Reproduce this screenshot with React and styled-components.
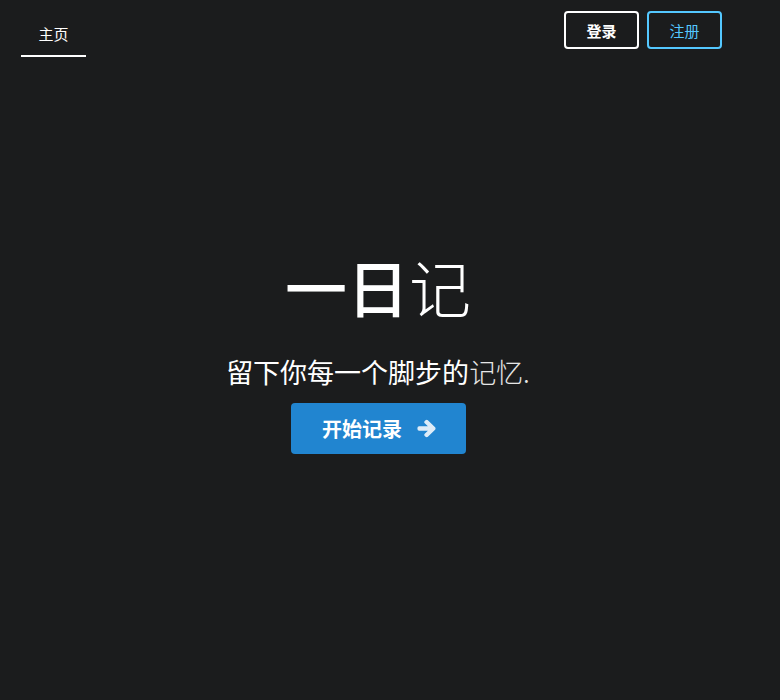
import React from "react";
import styled, { createGlobalStyle } from "styled-components";
import { FaArrowRight } from "react-icons/fa";

const GlobalStyle = createGlobalStyle`
  html, body {
    margin: 0;
    padding: 0;
    background: #1b1c1d;
  }
  body {
    font-family: Lato, "Noto Sans CJK SC", sans-serif;
    color: #fff;
  }
`;

const Page = styled.div`
  min-height: 700px;
  background: #1b1c1d;
  display: flex;
  flex-direction: column;
`;

const Header = styled.div`
  display: flex;
  align-items: flex-start;
  justify-content: space-between;
  padding: 11px 58px 0 21px;
`;

const NavItem = styled.a`
  display: flex;
  align-items: center;
  justify-content: center;
  width: 65px;
  height: 44px;
  border-bottom: 2px solid #fff;
  font-size: 15px;
  color: #fff;
  text-decoration: none;
`;

const Actions = styled.div`
  display: flex;
  gap: 8px;
`;

const OutlineButton = styled.button`
  width: 75px;
  height: 38px;
  background: transparent;
  border: 2px solid ${(p) => (p.$blue ? "#54c8ff" : "#fff")};
  border-radius: 4px;
  color: ${(p) => (p.$blue ? "#54c8ff" : "#fff")};
  font-family: Lato, "Noto Sans CJK SC", sans-serif;
  font-size: 15px;
  font-weight: ${(p) => (p.$blue ? 400 : 700)};
  cursor: pointer;
  padding: 0;
`;

const Hero = styled.div`
  display: flex;
  flex-direction: column;
  align-items: center;
  padding: 194px 24px 0 0;
`;

const Title = styled.h1`
  margin: 0;
  font-size: 62px;
  line-height: 70px;
  font-weight: 500;
  font-family: "Noto Sans CJK SC", sans-serif;
`;

const Thin = styled.span`
  font-weight: 300;
  color: ${(p) => p.$dim || "#fff"};
`;

const Subtitle = styled.h2`
  margin: 34px 0 0;
  font-size: 27px;
  line-height: 34px;
  font-weight: 400;
  font-family: "Noto Sans CJK SC", sans-serif;
`;

const StartButton = styled.button`
  margin-top: 14px;
  width: 175px;
  height: 51px;
  border: none;
  border-radius: 4px;
  background: #2185d0;
  color: #fff;
  font-family: "Noto Sans CJK SC", sans-serif;
  font-size: 20px;
  font-weight: 600;
  display: flex;
  align-items: center;
  justify-content: center;
  gap: 15px;
  padding: 0 0 0 2px;
  cursor: pointer;

  svg {
    width: 19px;
    height: 19px;
    opacity: 0.85;
    stroke: currentColor;
    stroke-width: 40px;
    stroke-linejoin: round;
  }
`;

export default function App() {
  return (
    <Page>
      <GlobalStyle />
      <Header>
        <NavItem href="#">主页</NavItem>
        <Actions>
          <OutlineButton>登录</OutlineButton>
          <OutlineButton $blue>注册</OutlineButton>
        </Actions>
      </Header>
      <Hero>
        <Title>
          一日<Thin>记</Thin>
        </Title>
        <Subtitle>
          留下你每一个脚步的<Thin $dim="#e6e6e6">记忆.</Thin>
        </Subtitle>
        <StartButton>
          开始记录
          <FaArrowRight />
        </StartButton>
      </Hero>
    </Page>
  );
}
